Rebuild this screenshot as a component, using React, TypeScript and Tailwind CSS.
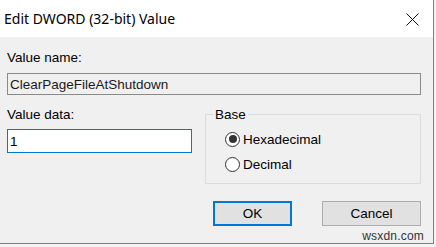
import React from "react";

function Radio({ checked, label }: { checked: boolean; label: string }) {
  return (
    <div className="flex items-center h-[18px]">
      <div className="w-[15px] h-[15px] rounded-full border border-[#333333] bg-white flex items-center justify-center">
        {checked && <div className="w-[8px] h-[8px] rounded-full bg-[#333333]" />}
      </div>
      <span className="ml-[3px] text-[13.5px] leading-[15px] text-black">{label}</span>
    </div>
  );
}

export default function App() {
  return (
    <div
      className="w-[436px] h-[247px] bg-[#f4f4f4] overflow-hidden"
      style={{ fontFamily: '"Liberation Sans", Arial, sans-serif' }}
    >
      <div className="w-[434px] h-[244px] border-r border-b border-[#7f7f7f] flex flex-col">
        <div className="h-[37px] bg-white flex items-center justify-between pl-[4px] pr-[14px] shrink-0">
          <span
            className="text-[14px] leading-[18px] text-black"
            style={{ fontFamily: '"Noto Sans", "Open Sans", sans-serif' }}
          >
            Edit DWORD (32-bit) Value
          </span>
          <svg width="13" height="13" viewBox="0 0 13 13" className="mt-[1px]">
            <path d="M0.5 0.5 L12.5 12.5 M12.5 0.5 L0.5 12.5" stroke="#111" strokeWidth="1" fill="none" />
          </svg>
        </div>
        <div className="flex-1 bg-[#f0f0f0] pl-[7px] pr-[12px] pt-[13px] relative flex flex-col">
          <div className="text-[13.5px] leading-[15px] text-black">Value name:</div>
          <div className="mt-[8px] h-[22px] w-[414px] border border-[#8a8a8a] bg-[#f0f0f0] flex items-center pl-[2px] text-[13.5px] leading-[15px] text-[#1a1a1a]">
            ClearPageFileAtShutdown
          </div>
          <div className="mt-[12px] flex items-start">
            <div className="w-[185px] flex flex-col">
              <div className="text-[13.5px] leading-[15px] text-black">Value data:</div>
              <div className="mt-[7px] h-[24px] w-[185px] border border-[#0078d7] bg-white flex items-center pl-[2px] text-[13.5px] leading-[15px] text-black">
                1
              </div>
            </div>
            <fieldset className="ml-[13px] w-[217px] h-[77px] border border-[#dcdcdc]">
              <legend className="ml-[7px] px-[2px] text-[13.5px] leading-[15px] text-black">Base</legend>
              <div className="flex flex-col gap-[7px] pt-[8px] pl-[19px]">
                <Radio checked label="Hexadecimal" />
                <Radio checked={false} label="Decimal" />
              </div>
            </fieldset>
          </div>
          <div className="mt-[17px] flex justify-end gap-[30px]">
            <div className="w-[79px] h-[25px] border-2 border-[#0078d7] bg-[#e1e1e1] flex items-center justify-center text-[13.5px] leading-[15px] text-black">
              OK
            </div>
            <div className="w-[99px] h-[25px] border border-[#adadad] bg-[#e1e1e1] flex items-center justify-center text-[13.5px] leading-[15px] text-black">
              Cancel
            </div>
          </div>
          <div className="absolute right-[9px] bottom-0 text-[12px] leading-[14px] text-[#333333] tracking-[0.2px]">
            wsxdn.com
          </div>
        </div>
      </div>
    </div>
  );
}
